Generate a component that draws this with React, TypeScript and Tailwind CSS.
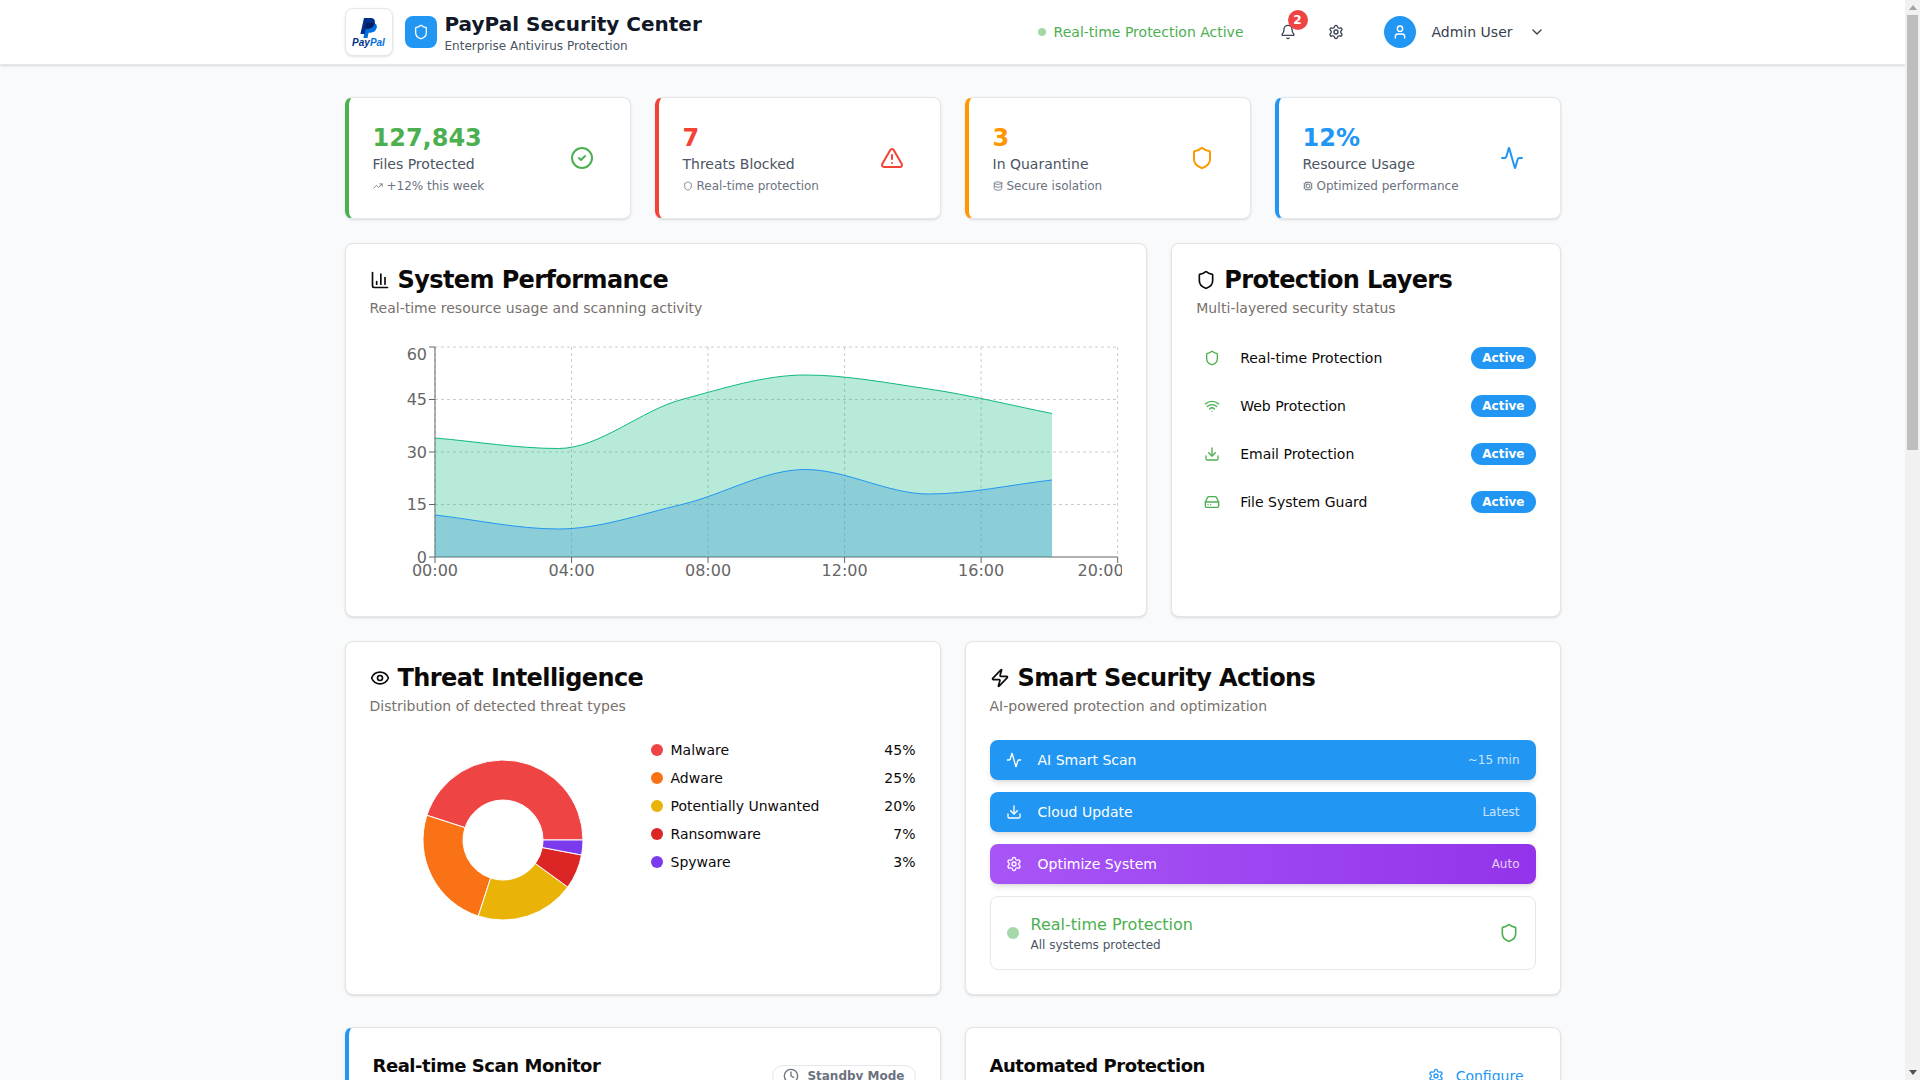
import React from 'react';
import {
  Shield, CircleCheck, TriangleAlert, Activity, TrendingUp, Database, Cpu, ChartColumn, Eye, Zap,
  Wifi, Download, HardDrive, Bell, Settings, User, ChevronDown, Clock,
} from 'lucide-react';

const stats = [
  { value: '127,843', label: 'Files Protected', note: '+12% this week', Icon: CircleCheck, NoteIcon: TrendingUp, border: 'border-l-[#4caf50]', text: 'text-[#4caf50]' },
  { value: '7', label: 'Threats Blocked', note: 'Real-time protection', Icon: TriangleAlert, NoteIcon: Shield, border: 'border-l-[#f44336]', text: 'text-[#f44336]' },
  { value: '3', label: 'In Quarantine', note: 'Secure isolation', Icon: Shield, NoteIcon: Database, border: 'border-l-[#ff9800]', text: 'text-[#ff9800]' },
  { value: '12%', label: 'Resource Usage', note: 'Optimized performance', Icon: Activity, NoteIcon: Cpu, border: 'border-l-[#2196f3]', text: 'text-[#2196f3]' },
];

const layers = [
  { name: 'Real-time Protection', Icon: Shield },
  { name: 'Web Protection', Icon: Wifi },
  { name: 'Email Protection', Icon: Download },
  { name: 'File System Guard', Icon: HardDrive },
];

const threats = [
  { name: 'Malware', pct: 45, color: '#ef4444', dot: 'bg-[#ef4444]' },
  { name: 'Adware', pct: 25, color: '#f97316', dot: 'bg-[#f97316]' },
  { name: 'Potentially Unwanted', pct: 20, color: '#eab308', dot: 'bg-[#eab308]' },
  { name: 'Ransomware', pct: 7, color: '#dc2626', dot: 'bg-[#dc2626]' },
  { name: 'Spyware', pct: 3, color: '#7c3aed', dot: 'bg-[#7c3aed]' },
];

// chart geometry, same box as the plot in the reference
const X0 = 65;
const Y0 = 5;
const PLOT_W = 682.67;
const PLOT_H = 210;
const STEP = 123.4;
const yPos = (v: number) => Y0 + PLOT_H - (v / 60) * PLOT_H;

const cpuData = [12, 8, 15, 25, 18, 22];
const scanData = [34, 31, 45, 52, 48, 41];

// monotone cubic, like d3 curveMonotoneX
function monotonePath(values: number[]) {
  const pts = values.map((v, i) => [X0 + i * STEP, yPos(v)]);
  const n = pts.length;
  const slopes: number[] = [];
  for (let i = 0; i < n - 1; i++) slopes.push((pts[i + 1][1] - pts[i][1]) / STEP);
  const tang: number[] = [];
  for (let i = 0; i < n; i++) {
    if (i === 0) tang.push(slopes[0]);
    else if (i === n - 1) tang.push(slopes[n - 2]);
    else if (slopes[i - 1] * slopes[i] <= 0) tang.push(0);
    else tang.push((2 * slopes[i - 1] * slopes[i]) / (slopes[i - 1] + slopes[i]));
  }
  let d = `M${pts[0][0]},${pts[0][1]}`;
  for (let i = 0; i < n - 1; i++) {
    const h = STEP / 3;
    d += `C${pts[i][0] + h},${pts[i][1] + tang[i] * h} ${pts[i + 1][0] - h},${pts[i + 1][1] - tang[i + 1] * h} ${pts[i + 1][0]},${pts[i + 1][1]}`;
  }
  return d;
}

function PerformanceChart() {
  const xLabels = ['00:00', '04:00', '08:00', '12:00', '16:00', '20:00'];
  const yLabels = [60, 45, 30, 15, 0];
  const bottom = Y0 + PLOT_H;
  const right = X0 + PLOT_W;
  const endX = X0 + 5 * STEP;
  const closeArea = ` L${endX},${bottom} L${X0},${bottom} Z`;
  return (
    <svg width="752.67" height="250" className="block font-['DejaVu_Sans',sans-serif]">
      {yLabels.slice(0, 4).map(v => (
        <line key={v} x1={X0} x2={right} y1={yPos(v)} y2={yPos(v)} stroke="#ccc" strokeDasharray="3 3" />
      ))}
      {xLabels.map((_, i) => (
        <line key={i} x1={X0 + (i * PLOT_W) / 5} x2={X0 + (i * PLOT_W) / 5} y1={Y0} y2={bottom} stroke="#ccc" strokeDasharray="3 3" />
      ))}
      <line x1={X0} x2={X0} y1={Y0} y2={bottom} stroke="#666" />
      <line x1={X0} x2={right} y1={bottom} y2={bottom} stroke="#666" />
      <path d={monotonePath(scanData) + closeArea} fill="#10b981" fillOpacity={0.3} />
      <path d={monotonePath(scanData)} fill="none" stroke="#10b981" />
      <path d={monotonePath(cpuData) + closeArea} fill="#2890d3" fillOpacity={0.3} />
      <path d={monotonePath(cpuData)} fill="none" stroke="#2196f3" />
      {yLabels.map(v => (
        <g key={v}>
          <line x1={X0 - 6} x2={X0} y1={yPos(v)} y2={yPos(v)} stroke="#666" />
          <text x={X0 - 8} y={v === 60 ? Y0 + 13 : v === 0 ? bottom + 5.5 : yPos(v) + 5.5} textAnchor="end" fontSize="16" fill="#666">{v}</text>
        </g>
      ))}
      {xLabels.map((t, i) => {
        const x = X0 + (i * PLOT_W) / 5;
        return (
          <g key={t}>
            <line x1={x} x2={x} y1={bottom} y2={bottom + 6} stroke="#666" />
            <text x={i === 5 ? right + 6 : x} y={bottom + 18.5} textAnchor={i === 5 ? 'end' : 'middle'} fontSize="16" fill="#666">{t}</text>
          </g>
        );
      })}
    </svg>
  );
}

function arcPath(from: number, to: number, r0: number, r1: number, c: number) {
  const p = (a: number, r: number) => `${c + r * Math.cos(a)},${c - r * Math.sin(a)}`;
  const large = to - from > Math.PI ? 1 : 0;
  return `M${p(from, r1)}A${r1},${r1} 0 ${large} 0 ${p(to, r1)}L${p(to, r0)}A${r0},${r0} 0 ${large} 1 ${p(from, r0)}Z`;
}

function ThreatDonut() {
  let angle = 0;
  return (
    <svg width="200" height="200" className="block">
      {threats.map(t => {
        const from = angle;
        angle += (t.pct / 100) * Math.PI * 2;
        return <path key={t.name} d={arcPath(from, angle, 40, 80, 100)} fill={t.color} stroke="#fff" />;
      })}
    </svg>
  );
}

function PayPalLogo() {
  return (
    <div className="w-12 h-12 bg-white border border-[#e5e7eb] rounded-lg shadow-sm flex flex-col items-center justify-center">
      <svg width="17" height="20" viewBox="0 0 24 28" className="mt-0.5">
        <path fill="#0070e0" d="M9 7h9c4.5 0 6.5 2.6 5.6 6.6C22.7 18 19 20.6 14.4 20.6h-2.3L10.6 28H4.8z" />
        <path fill="#003087" d="M5.6 0h9c4.8 0 7.2 2.7 6.3 7-1 5-4.9 8-10 8H8.2l-1.6 7.6H.6z" />
        <path fill="#001c64" d="M8.8 7h11.8c-1.2 5-4.7 8-9.7 8H8.2l-1 0z" />
      </svg>
      <div className="text-[10px] leading-[10px] font-bold italic font-['Liberation_Sans',sans-serif]">
        <span className="text-[#003087]">Pay</span><span className="text-[#0070e0]">Pal</span>
      </div>
    </div>
  );
}

function CardTitle({ Icon, title, subtitle }: { Icon: typeof Shield; title: string; subtitle: string }) {
  return (
    <div className="mb-6">
      <h3 className="flex items-center gap-2 text-2xl leading-none font-semibold tracking-tight text-[#0c0a09]">
        <Icon size={20} />
        {title}
      </h3>
      <p className="mt-1.5 text-sm text-[#78716c]">{subtitle}</p>
    </div>
  );
}

// the window's scrollbar, the browser that photographs the page hides its own
function PageScrollbar() {
  return (
    <div className="w-[15px] shrink-0 h-full bg-[#f1f1f1] flex flex-col items-center">
      <div className="h-[15px] shrink-0 flex items-center justify-center">
        <span className="border-x-[4px] border-x-transparent border-b-[5px] border-b-[#a3a3a3]" />
      </div>
      <div className="w-[11px] h-[435px] bg-[#bebebe]" />
      <div className="flex-1" />
      <div className="h-[15px] shrink-0 flex items-center justify-center">
        <span className="border-x-[4px] border-x-transparent border-t-[5px] border-t-[#505050]" />
      </div>
    </div>
  );
}

const cardClass = 'bg-white border border-[#e7e5e4] rounded-lg shadow-sm p-6';

export default function App() {
  return (
    <div className="h-screen flex overflow-hidden bg-[#f9fafb] font-['DejaVu_Sans',sans-serif]">
      <div className="flex-1 min-w-0 overflow-hidden">
        <header className="bg-white border-b border-[#e5e7eb] shadow-sm">
          <div className="mx-auto max-w-7xl px-8 h-16 flex items-center justify-between">
            <div className="flex items-center">
              <PayPalLogo />
              <div className="ml-3 w-8 h-8 bg-[#2196f3] rounded-lg flex items-center justify-center text-white">
                <Shield size={16} />
              </div>
              <div className="ml-2">
                <div className="text-xl font-bold text-[#111827]">PayPal Security Center</div>
                <div className="text-xs text-[#4b5563]">Enterprise Antivirus Protection</div>
              </div>
            </div>
            <div className="flex items-center">
              <div className="flex items-center gap-2 mr-6">
                <span className="w-2 h-2 rounded-full bg-[#4caf50] opacity-50" />
                <span className="text-sm text-[#4caf50]">Real-time Protection Active</span>
              </div>
              <button className="relative w-10 h-10 flex items-center justify-center text-[#374151]">
                <Bell size={16} />
                <span className="absolute -top-0.5 right-0 w-5 h-5 rounded-full bg-[#ef4444] text-white text-xs font-semibold flex items-center justify-center">2</span>
              </button>
              <button className="ml-2 w-10 h-10 flex items-center justify-center text-[#374151]">
                <Settings size={16} />
              </button>
              <button className="ml-3 px-4 flex items-center text-[#374151]">
                <span className="w-8 h-8 rounded-full bg-[#2196f3] text-white flex items-center justify-center">
                  <User size={16} />
                </span>
                <span className="ml-4 text-sm font-medium">Admin User</span>
                <ChevronDown size={16} className="ml-4" />
              </button>
            </div>
          </div>
        </header>

        <main className="mx-auto max-w-7xl px-8 py-8">
          <div className="grid grid-cols-4 gap-6 mb-6">
            {stats.map(s => (
              <div key={s.label} className={`bg-white border border-[#e5e7eb] border-l-4 ${s.border} rounded-lg shadow-sm p-6 flex items-center justify-between`}>
                <div>
                  <div className={`text-2xl font-bold ${s.text}`}>{s.value}</div>
                  <div className="text-sm text-[#4b5563]">{s.label}</div>
                  <div className="mt-1 flex items-center text-xs text-[#6b7280]">
                    <s.NoteIcon size={10} className="mr-1" />
                    {s.note}
                  </div>
                </div>
                <div className={`p-3 ${s.text}`}>
                  <s.Icon size={24} />
                </div>
              </div>
            ))}
          </div>

          <div className="grid grid-cols-3 gap-6 mb-6">
            <div className={`col-span-2 ${cardClass}`}>
              <CardTitle Icon={ChartColumn} title="System Performance" subtitle="Real-time resource usage and scanning activity" />
              <PerformanceChart />
            </div>
            <div className={cardClass}>
              <CardTitle Icon={Shield} title="Protection Layers" subtitle="Multi-layered security status" />
              <div className="flex flex-col gap-4">
                {layers.map(l => (
                  <div key={l.name} className="flex items-center justify-between h-8">
                    <div className="flex items-center gap-3">
                      <div className="p-2 text-[#4caf50]">
                        <l.Icon size={16} />
                      </div>
                      <span className="text-sm font-medium text-[#0c0a09]">{l.name}</span>
                    </div>
                    <span className="rounded-full border border-transparent bg-[#2196f3] text-white text-xs font-semibold px-2.5 py-0.5">Active</span>
                  </div>
                ))}
              </div>
            </div>
          </div>

          <div className="grid grid-cols-2 gap-6 mb-8">
            <div className={cardClass}>
              <CardTitle Icon={Eye} title="Threat Intelligence" subtitle="Distribution of detected threat types" />
              <div className="grid grid-cols-2 gap-4">
                <div className="flex justify-center pl-[2px]">
                  <ThreatDonut />
                </div>
                <div className="flex flex-col gap-2">
                  {threats.map(t => (
                    <div key={t.name} className="flex items-center justify-between text-sm text-[#0c0a09]">
                      <div className="flex items-center gap-2">
                        <span className={`w-3 h-3 rounded-full ${t.dot}`} />
                        {t.name}
                      </div>
                      <span>{t.pct}%</span>
                    </div>
                  ))}
                </div>
              </div>
            </div>

            <div className={cardClass}>
              <CardTitle Icon={Zap} title="Smart Security Actions" subtitle="AI-powered protection and optimization" />
              <div className="flex flex-col gap-3">
                <button className="h-10 px-4 rounded-lg bg-[#2196f3] text-white shadow-md flex items-center justify-between">
                  <span className="flex items-center gap-4 text-sm"><Activity size={16} />AI Smart Scan</span>
                  <span className="text-xs opacity-75">~15 min</span>
                </button>
                <button className="h-10 px-4 rounded-lg bg-[#2196f3] text-white shadow-md flex items-center justify-between">
                  <span className="flex items-center gap-4 text-sm"><Download size={16} />Cloud Update</span>
                  <span className="text-xs opacity-75">Latest</span>
                </button>
                <button className="h-10 px-4 rounded-lg bg-linear-to-r from-[#a855f7] to-[#9333ea] text-white shadow-md flex items-center justify-between">
                  <span className="flex items-center gap-4 text-sm"><Settings size={16} />Optimize System</span>
                  <span className="text-xs opacity-75">Auto</span>
                </button>
                <div className="border border-[#e5e7eb] rounded-lg p-4 flex items-center justify-between">
                  <div className="flex items-center gap-3">
                    <span className="w-3 h-3 rounded-full bg-[#4caf50] opacity-50" />
                    <div>
                      <div className="text-base font-medium text-[#4caf50]">Real-time Protection</div>
                      <div className="text-xs text-[#4b5563]">All systems protected</div>
                    </div>
                  </div>
                  <Shield size={20} className="text-[#4caf50]" />
                </div>
              </div>
            </div>
          </div>

          <div className="grid grid-cols-2 gap-6">
            <div className="bg-white border border-[#e7e5e4] border-l-4 border-l-[#2196f3] rounded-lg shadow-sm px-6 pt-6">
              <div className="flex items-center justify-between">
                <div>
                  <div className="text-lg font-semibold tracking-tight text-[#0c0a09]">Real-time Scan Monitor</div>
                  <div className="h-5" />
                </div>
                <span className="flex items-center gap-2 border border-[#e5e7eb] rounded-full px-2.5 py-0.5 text-xs font-semibold text-[#6b7280]">
                  <Clock size={16} />
                  Standby Mode
                </span>
              </div>
            </div>
            <div className="bg-white border border-[#e7e5e4] rounded-lg shadow-sm px-6 pt-6">
              <div className="flex items-center justify-between">
                <div>
                  <div className="text-lg font-semibold tracking-tight text-[#0c0a09]">Automated Protection</div>
                  <div className="h-5" />
                </div>
                <button className="h-9 px-3 flex items-center gap-3 text-sm text-[#2196f3]">
                  <Settings size={16} />
                  Configure
                </button>
              </div>
            </div>
          </div>
        </main>
      </div>
      <PageScrollbar />
    </div>
  );
}
